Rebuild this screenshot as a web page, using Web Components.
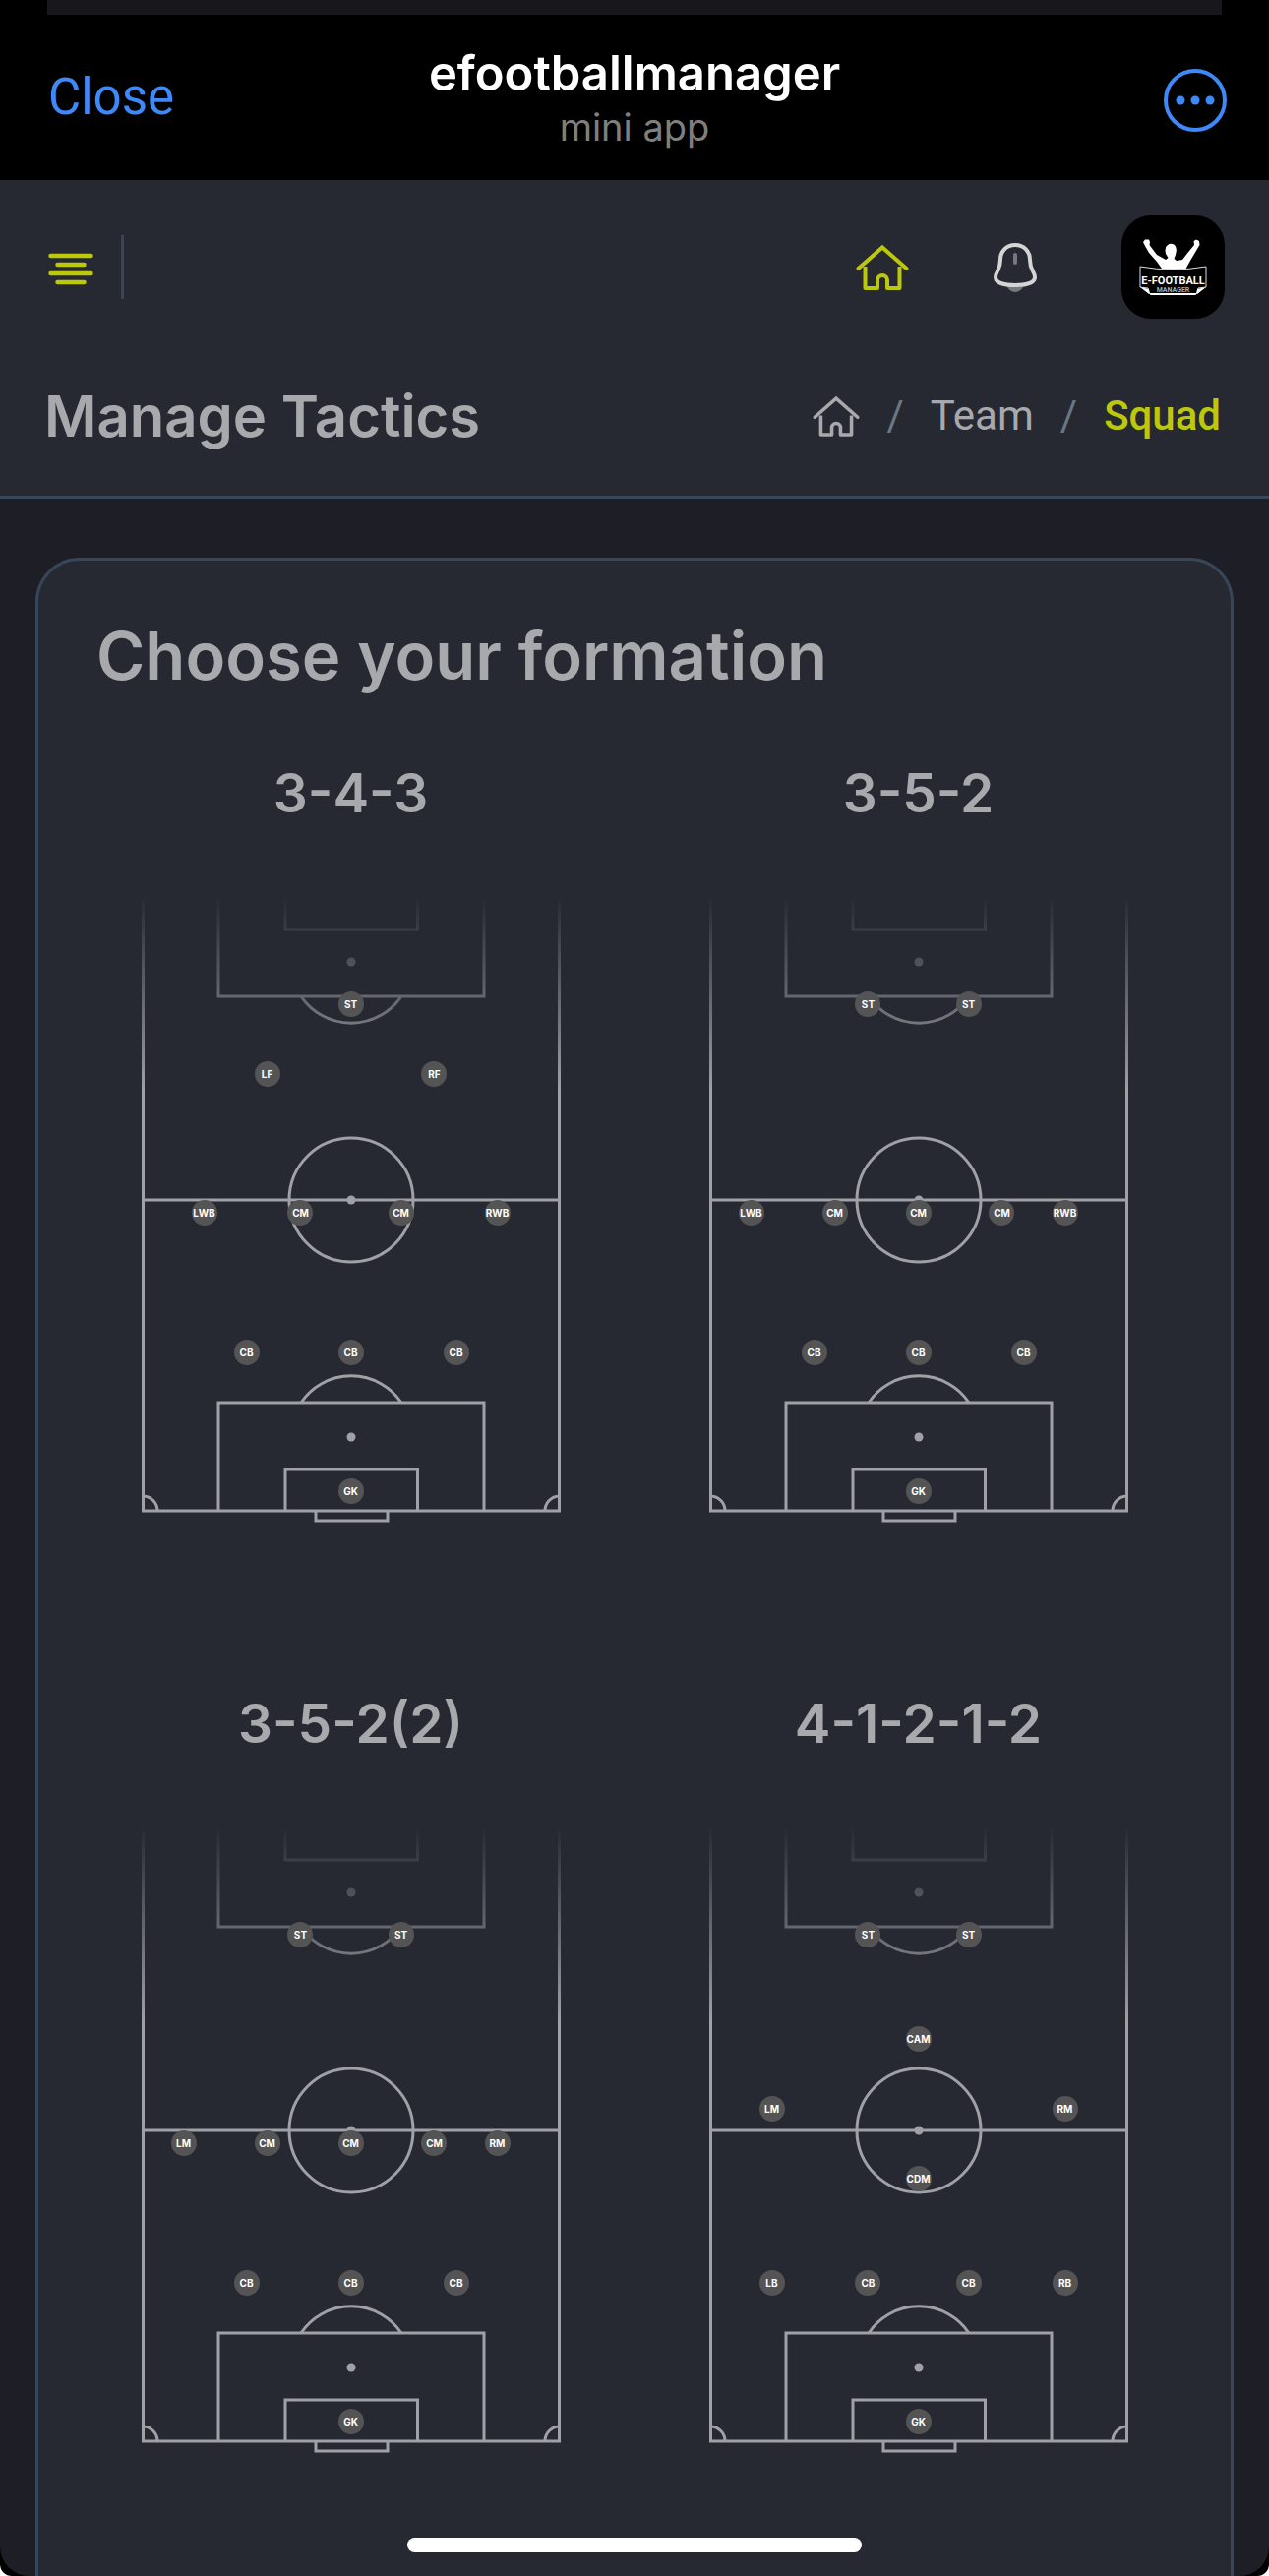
<!DOCTYPE html>
<html lang="en">
<head>
<meta charset="utf-8">
<meta name="viewport" content="width=device-width, initial-scale=1">
<title>efootballmanager</title>
<style>
    html {
        background: #fff;
    }

    body {
        margin: 0;
        background: #000;
        border-radius: 0 0 12px 12px;
        overflow: hidden;
        font-family: Inter, "Liberation Sans", sans-serif;
        color: #a8a9ac;
        --accent: #bcc90b;
        --line: #38465a;
        --panel: #262932;
        --page: #1e1e26;
        --blue: #3e88f7;
    }
</style>
</head>
<body>
<mini-app name="efootballmanager">
    <app-toolbar></app-toolbar>
    <page-title>
        Manage Tactics
        <a slot="crumb" href="#team">Team</a>
        <span slot="current" aria-current="page">Squad</span>
    </page-title>
    <formation-card>
        <span slot="title">Choose your formation</span>
        <formation-pitch name="3-4-3" players="ST 213 121, LF 128 192, RF 298 192, LWB 64 333, CM 162 333, CM 264 333, RWB 362 333, CB 107 475, CB 213 475, CB 320 475, GK 213 616"></formation-pitch>
        <formation-pitch name="3-5-2" players="ST 162 121, ST 264 121, LWB 43 333, CM 128 333, CM 213 333, CM 298 333, RWB 362 333, CB 107 475, CB 213 475, CB 320 475, GK 213 616"></formation-pitch>
        <formation-pitch name="3-5-2(2)" players="ST 162 121, ST 264 121, LM 43 333, CM 128 333, CM 213 333, CM 298 333, RM 362 333, CB 107 475, CB 213 475, CB 320 475, GK 213 616"></formation-pitch>
        <formation-pitch name="4-1-2-1-2" players="ST 162 121, ST 264 121, CAM 213 227, LM 64 298, RM 362 298, CDM 213 369, LB 64 475, CB 162 475, CB 264 475, RB 362 475, GK 213 616"></formation-pitch>
    </formation-card>
</mini-app>

<script>
class BaseElement extends HTMLElement {
    connectedCallback() {
        if (this.shadowRoot) return;
        const shadow = this.attachShadow({ mode: 'open' });
        const template = document.createElement('template');
        template.innerHTML = this.render();
        shadow.appendChild(template.content.cloneNode(true));
    }
}

// outer window: black title bar, scrolled page and home indicator
class MiniApp extends BaseElement {
    render() {
        return `
            <style>
                :host {
                    display: flex;
                    flex-direction: column;
                    height: 100vh;
                    overflow: hidden;
                }
                .behind {
                    flex: none;
                    height: 15px;
                    margin: 0 48px;
                    background: #18171c;
                }
                .bar {
                    flex: none;
                    display: grid;
                    grid-template-columns: 1fr auto 1fr;
                    align-items: center;
                    height: 168px;
                    padding: 0 43px 0 43px;
                }
                button {
                    border: 0;
                    padding: 0;
                    background: none;
                    color: var(--blue);
                    font: 400 51px/60px Roboto, sans-serif;
                    cursor: pointer;
                }
                .close { justify-self: start; padding-left: 6px; }
                .more { justify-self: end; }
                svg { display: block; }
                .name { text-align: center; }
                h1 {
                    margin: 0;
                    font-size: 49px;
                    line-height: 60px;
                    font-weight: 600;
                    color: #fff;
                }
                p {
                    margin: 0;
                    font-size: 38px;
                    line-height: 48px;
                    color: #7f7f7f;
                }
                .page {
                    flex: 1;
                    min-height: 0;
                    overflow: hidden;
                    background: var(--page);
                    border-radius: 0 0 30px 30px;
                }
                .indicator {
                    position: fixed;
                    left: 50%;
                    bottom: 24px;
                    width: 462px;
                    height: 15px;
                    margin-left: -231px;
                    border-radius: 8px;
                    background: #fff;
                }
            </style>
            <div class="behind"></div>
            <header class="bar">
                <button class="close" type="button">Close</button>
                <div class="name">
                    <h1>${this.getAttribute('name')}</h1>
                    <p>mini app</p>
                </div>
                <button class="more" type="button" aria-label="More">
                    <svg width="64" height="70" viewBox="0 0 64 70" fill="currentColor">
                        <circle cx="32" cy="38" r="30" fill="none" stroke="currentColor" stroke-width="4"/>
                        <circle cx="17" cy="38" r="4.5"/>
                        <circle cx="32" cy="38" r="4.5"/>
                        <circle cx="47" cy="38" r="4.5"/>
                    </svg>
                </button>
            </header>
            <main class="page"><slot></slot></main>
            <div class="indicator"></div>
        `;
    }
}

class HomeIcon extends BaseElement {
    render() {
        return `
            <style>
                :host { display: block; width: 54px; }
                svg { display: block; width: 100%; overflow: visible; }
            </style>
            <svg viewBox="0 0 54 48" fill="none" stroke="currentColor" stroke-width="4" stroke-linecap="round" stroke-linejoin="miter">
                <path d="M2.5 25 27 3.5 51.5 25"/>
                <path d="M9.500 23V45H22V37a5 5 0 0 1 10 0V45H44.500V23" stroke-linecap="butt" stroke-linejoin="round"/>
            </svg>
        `;
    }
}

class ClubLogo extends BaseElement {
    render() {
        return `
            <style>
                :host {
                    display: block;
                    width: 105px;
                    height: 105px;
                    border-radius: 30px;
                    background: #000;
                }
                svg { display: block; }
                text { font-family: Roboto, "Liberation Sans", sans-serif; font-weight: 700; text-anchor: middle; }
            </style>
            <svg width="105" height="105" viewBox="0 0 105 105" fill="#fff">
                <path d="M22 27 24 24.500 28 24.500 29 27 28.500 30 36 40 45 45 47.500 43 45 39Q43.500 32 47 30Q50 27.500 54 30Q57 33 55 40L53.500 44 56 46 62 45 67 38.500 74 30 73.500 26 76 24.500 79 26 79.500 30 76.500 35 70 46 65 55Q52 58 41 54L36 47 28 38 24 31Z"/>
                <path d="M19 52Q52 58 86 52V73L78 74 76 80H29L27 74 19 73Z" fill="#000" stroke="#ddd" stroke-width="1"/>
                <path d="M19 73 28 75V80ZM86 73 77 75V80ZM28 79H77L75 81H30Z"/>
                <text x="52.500" y="70" font-size="11">E-FOOTBALL</text>
                <text x="52.500" y="78" font-size="7" fill="#aaa">MANAGER</text>
            </svg>
        `;
    }
}

class AppToolbar extends BaseElement {
    render() {
        return `
            <style>
                :host {
                    display: flex;
                    align-items: center;
                    justify-content: space-between;
                    height: 177px;
                    padding: 0 45px 0 49px;
                    background: var(--panel);
                }
                .left { display: flex; align-items: center; gap: 28px; }
                .right { display: flex; align-items: center; gap: 86px; }
                .divider { width: 3px; height: 65px; background: var(--line); }
                button { display: block; border: 0; padding: 0; background: none; cursor: pointer; }
                .menu, .home { color: var(--accent); }
                svg { display: block; }
            </style>
            <div class="left">
                <button class="menu" type="button" aria-label="Menu">
                    <svg width="46" height="36" viewBox="0 0 46 36" fill="none" stroke="currentColor" stroke-width="4.500" stroke-linecap="round">
                        <path d="M2.500 6H43.500M9.500 15H36.500M2.500 24H43.500M9.500 33H36.500"/>
                    </svg>
                </button>
                <div class="divider"></div>
            </div>
            <nav class="right">
                <a class="home" href="#home" aria-label="Home"><home-icon></home-icon></a>
                <button type="button" aria-label="Notifications">
                    <svg width="44" height="50" viewBox="0 0 44 50">
                        <path d="M13 43Q16 50 22 50Q28 50 31 43Z" fill="#77787e"/>
                        <path d="M22 12V20" stroke="#77787e" stroke-width="4" stroke-linecap="round"/>
                        <path d="M22 2C13 2 7 8.500 7 17C7 28 2 29 2 35C2 41 12 43 22 43C32 43 42 41 42 35C42 29 37 28 37 17C37 8.500 31 2 22 2Z" fill="none" stroke="#d4d4d6" stroke-width="4"/>
                    </svg>
                </button>
                <club-logo></club-logo>
            </nav>
        `;
    }
}

class PageTitle extends BaseElement {
    render() {
        return `
            <style>
                :host {
                    display: flex;
                    align-items: center;
                    justify-content: space-between;
                    height: 126px;
                    padding: 0 49px 18px 45px;
                    background: var(--panel);
                    border-bottom: 3px solid var(--line);
                }
                h2 { margin: 0; font-size: 58px; line-height: 72px; font-weight: 600; }
                nav {
                    display: flex;
                    align-items: center;
                    gap: 27px;
                    font: 400 42px/48px Roboto, sans-serif;
                }
                a { color: inherit; }
                home-icon { width: 48px; }
                .sep { color: #6b7782; }
                ::slotted(a) { color: inherit; text-decoration: none; }
                ::slotted([aria-current]) { color: var(--accent); font-weight: 500; }
            </style>
            <h2><slot></slot></h2>
            <nav aria-label="Breadcrumb">
                <a href="#home" aria-label="Home"><home-icon></home-icon></a>
                <span class="sep">/</span>
                <slot name="crumb"></slot>
                <span class="sep">/</span>
                <slot name="current"></slot>
            </nav>
        `;
    }
}

class FormationCard extends BaseElement {
    render() {
        return `
            <style>
                :host {
                    display: block;
                    margin: 60px 36px;
                    padding: 57px 29px 172px;
                    background: var(--panel);
                    border: 3px solid var(--line);
                    border-radius: 45px;
                }
                h3 {
                    margin: 0 30px 67px;
                    font-size: 67px;
                    line-height: 80px;
                    font-weight: 600;
                }
                .grid {
                    display: grid;
                    grid-template-columns: 1fr 1fr;
                    row-gap: 172px;
                }
            </style>
            <h3><slot name="title"></slot></h3>
            <div class="grid"><slot></slot></div>
        `;
    }
}

const PITCH_WIDTH = 426;
const PITCH_HEIGHT = 648;

class FormationPitch extends BaseElement {
    getPlayers() {
        return this.getAttribute('players').split(',').map((item) => {
            const [role, x, y] = item.trim().split(' ');
            const left = (x / PITCH_WIDTH) * 100;
            const top = (y / PITCH_HEIGHT) * 100;
            return `<span class="player" style="left: ${left}%; top: ${top}%">${role}</span>`;
        }).join('');
    }
    render() {
        return `
            <style>
                :host {
                    display: flex;
                    flex-direction: column;
                    align-items: center;
                    gap: 62px;
                }
                h4 { margin: 0; font-size: 55px; line-height: 64px; font-weight: 600; }
                .pitch { position: relative; width: 100%; max-width: 426px; }
                svg {
                    display: block;
                    width: 100%;
                    -webkit-mask-image: linear-gradient(transparent 10px, #000 210px);
                    mask-image: linear-gradient(transparent 10px, #000 210px);
                }
                .player {
                    position: absolute;
                    display: flex;
                    align-items: center;
                    justify-content: center;
                    width: 26px;
                    height: 26px;
                    margin: -13px 0 0 -13px;
                    border-radius: 50%;
                    background: #545454;
                    color: #fff;
                    font-size: 10px;
                    line-height: 12px;
                    font-weight: 700;
                }
            </style>
            <h4>${this.getAttribute('name')}</h4>
            <div class="pitch">
                <svg viewBox="0 0 426 648" fill="none" stroke="#a0a1a6" stroke-width="3">
                    <path d="M1.500 14V636H424.500V14M1.500 320H424.500"/>
                    <circle cx="213" cy="320" r="63"/>
                    <path d="M78 14V113H348V14M146 14V45H280.500V14"/>
                    <path d="M162 113A61.500 61.500 0 0 0 264 113"/>
                    <path d="M78 636V526H348V636M146 636V594H280.500V636M177 636V646H250V636"/>
                    <path d="M162 526A61.500 61.500 0 0 1 264 526"/>
                    <path d="M1.500 621A15 15 0 0 1 16 636M424.500 621A15 15 0 0 0 410 636"/>
                    <g fill="#a0a1a6" stroke="none">
                        <circle cx="213" cy="78" r="4.500"/>
                        <circle cx="213" cy="320" r="4.500"/>
                        <circle cx="213" cy="561" r="4.500"/>
                    </g>
                </svg>
                ${this.getPlayers()}
            </div>
        `;
    }
}

customElements.define('home-icon', HomeIcon);
customElements.define('club-logo', ClubLogo);
customElements.define('app-toolbar', AppToolbar);
customElements.define('page-title', PageTitle);
customElements.define('formation-pitch', FormationPitch);
customElements.define('formation-card', FormationCard);
customElements.define('mini-app', MiniApp);
</script>
</body>
</html>
